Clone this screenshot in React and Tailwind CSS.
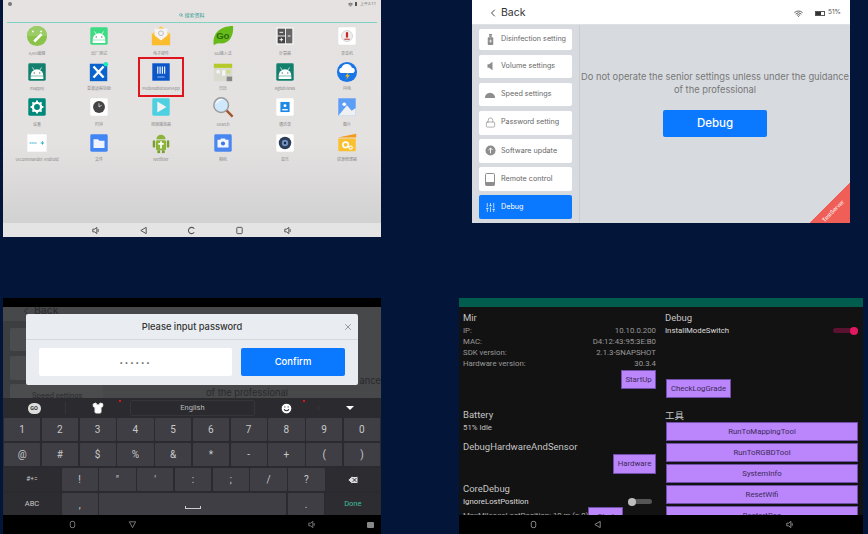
import React from 'react';
import { ChevronLeft, X, Lock, SlidersVertical, Wifi, Smile, Shirt, Delete, Search } from 'lucide-react';

const Droid = ({ color = '#fff', x = 12, y = 13, s = 1 }) => (
  <g transform={`translate(${x} ${y}) scale(${s})`} fill={color}>
    <path d="M-7 3a7 7 0 0 1 14 0z" />
    <rect x="-7" y="3.6" width="14" height="3" rx=".8" />
    <path d="M-5-6l2 3M5-6l-2 3" stroke={color} strokeWidth=".8" />
    <circle cx="-3" cy="0" r=".8" fill="#0008" />
    <circle cx="3" cy="0" r=".8" fill="#0008" />
  </g>
);

const Svg = ({ children }) => (
  <svg viewBox="0 0 24 24" className="h-[22px] w-[22px]">
    {children}
  </svg>
);

const Tile = ({ bg, children }) => (
  <Svg>
    <rect x="2.5" y="2.5" width="19" height="19" rx="1.5" fill={bg} />
    {children}
  </Svg>
);

const icons = {
  wrench: (
    <Svg>
      <circle cx="12" cy="12" r="11" fill="#8bc34a" />
      <path d="M1 12a11 11 0 0 1 22 0z" fill="#9ccc65" />
      <circle cx="7.5" cy="7" r="1" fill="#fff" />
      <circle cx="16.5" cy="7" r="1" fill="#fff" />
      <path d="M18 11l-8 8-2-2 8-8z" fill="#fff" />
    </Svg>
  ),
  factory: <Tile bg="#3ddc84"><Droid /></Tile>,
  mail: (
    <Svg>
      <path d="M3 9l9-8 9 8v3H3z" fill="#ffca4f" />
      <rect x="5" y="4" width="14" height="13" fill="#f4f4f4" />
      <circle cx="12" cy="9" r="2.6" fill="none" stroke="#aaa" strokeWidth=".8" />
      <path d="M2 9l10 8 10-8v13H2z" fill="#fbbc2d" />
    </Svg>
  ),
  go: (
    <Svg>
      <path d="M2 22C0 10 8 1 23 1c1 12-5 20-15 19-3 0-4 1-6 2z" fill="#66bb1a" />
      <text x="4.5" y="15.5" fontSize="10.5" fontWeight="700" fill="#2e6b0a" fontFamily="Liberation Sans, sans-serif">Go</text>
    </Svg>
  ),
  calc: (
    <Svg>
      <rect x="2.5" y="2.5" width="19" height="19" fill="#f5f5f5" />
      <rect x="4" y="4" width="8" height="7.5" fill="#555" />
      <rect x="4" y="12.5" width="8" height="7.5" fill="#444" />
      <rect x="13" y="4" width="7" height="16" fill="#666" />
      <path d="M6 8h4M6 16h4M8 14v4M15 12h3" stroke="#fff" strokeWidth="1" />
    </Svg>
  ),
  rec: (
    <Tile bg="#fff">
      <circle cx="12" cy="12" r="6" fill="#eee" stroke="#bbb" strokeWidth=".6" />
      <rect x="10.8" y="7.5" width="2.4" height="6.5" rx="1.2" fill="#c62828" />
      <path d="M9 15.5h6" stroke="#c62828" strokeWidth="1" />
    </Tile>
  ),
  teal: <Tile bg="#12806d"><Droid /></Tile>,
  tools: (
    <Svg>
      <rect x="2" y="3" width="19" height="19" fill="#0b63ce" />
      <path d="M6 6l11 12M17 6L6 18" stroke="#fff" strokeWidth="2.6" />
      <circle cx="19.5" cy="3.5" r="2.5" fill="#1de9b6" />
    </Svg>
  ),
  pudu: (
    <Svg>
      <rect x="2.5" y="2.5" width="19" height="19" fill="#0b57c9" />
      <path d="M8.5 6v8M11 6v8M13.5 6v8M16 6v8" stroke="#fff" strokeWidth="1.2" />
      <path d="M8 17.5h8" stroke="#cfe0ff" strokeWidth=".8" />
    </Svg>
  ),
  cal: (
    <Svg>
      <rect x="2" y="3" width="20" height="19" fill="#d9dbd0" />
      <rect x="2" y="3" width="20" height="4.5" fill="#b6c92a" />
      <rect x="5" y="10" width="3.5" height="3.5" fill="#f5f5f5" />
      <rect x="11" y="10" width="3.5" height="6" fill="#f5f5f5" />
      <rect x="16" y="10" width="4" height="3.5" fill="#cfdc78" />
      <rect x="16" y="17" width="6" height="5" fill="#888" />
    </Svg>
  ),
  storm: (
    <Svg>
      <circle cx="12" cy="12" r="11" fill="#1976e8" />
      <path d="M5 13a3 3 0 0 1 1-5.6 6 6 0 0 1 11.4 0A3 3 0 0 1 19 13z" fill="#fff" />
      <path d="M13 13l-3 4h2.4l-1.4 3.5 4-5h-2.4l1-2.5z" fill="#ffc107" />
    </Svg>
  ),
  gear: (
    <Tile bg="#00897b">
      <circle cx="12" cy="12" r="4.5" fill="none" stroke="#fff" strokeWidth="2.6" />
      <path d="M12 5v2.5M12 16.5V19M5 12h2.5M16.5 12H19M7 7l1.7 1.7M15.3 15.3L17 17M17 7l-1.7 1.7M8.7 15.3L7 17" stroke="#fff" strokeWidth="2" />
    </Tile>
  ),
  clock: (
    <Tile bg="#fff">
      <circle cx="12" cy="12" r="6.5" fill="#444" />
      <path d="M12 12l3-2M12 12V8" stroke="#ddd" strokeWidth=".9" />
    </Tile>
  ),
  play: (
    <Tile bg="#4dd0e1">
      <path d="M8 6l10 6-10 6z" fill="#f2f2f2" />
    </Tile>
  ),
  search: (
    <Svg>
      <circle cx="10" cy="10" r="8" fill="#cfe8fb" stroke="#9a9a9a" strokeWidth="1.6" />
      <path d="M5 8a6 6 0 0 1 6-4" stroke="#fff" strokeWidth="1.2" fill="none" />
      <path d="M16 16l6.5 6.5" stroke="#a1552c" strokeWidth="2.6" />
    </Svg>
  ),
  contacts: (
    <Tile bg="#fff">
      <rect x="7" y="6.5" width="10" height="11" fill="#1e88e5" />
      <circle cx="12" cy="10.5" r="1.6" fill="#fff" />
      <path d="M9 15h6" stroke="#fff" strokeWidth="1.4" />
    </Tile>
  ),
  photo: (
    <Svg>
      <rect x="2.5" y="2.5" width="19" height="19" fill="#5c9df5" />
      <circle cx="9" cy="9" r="2" fill="#fff" />
      <path d="M2.5 21.5L12 10l5 6 4.5-3v8.500z" fill="#eef0f2" />
    </Svg>
  ),
  uic: (
    <Svg>
      <rect x="1.500" y="2.500" width="21" height="19" fill="#fff" />
      <path d="M4 12h8M16 12h4M18 10v4" stroke="#29a9c9" strokeWidth="1.2" strokeDasharray="1.500 .5" />
    </Svg>
  ),
  files: (
    <Tile bg="#4285f4">
      <path d="M6 8h5l1.500 1.500H18v8H6z" fill="#eef3fd" />
    </Tile>
  ),
  net: (
    <Svg>
      <path d="M7 8a5 5 0 0 1 10 0z" fill="#8cb33a" />
      <rect x="6.500" y="9" width="11" height="11" rx="1.500" fill="#8cb33a" />
      <rect x="3" y="9" width="2.600" height="8" rx="1.300" fill="#7a9e2e" />
      <rect x="18.400" y="9" width="2.600" height="8" rx="1.300" fill="#7a9e2e" />
      <path d="M12 10v8M9 13h6" stroke="#fff" strokeWidth="1.800" />
      <rect x="8" y="20" width="3" height="3" fill="#7a9e2e" />
      <rect x="13" y="20" width="3" height="3" fill="#7a9e2e" />
    </Svg>
  ),
  camera: (
    <Tile bg="#4a86f0">
      <path d="M6 8.500h3l1-1.500h4l1 1.500h3V17H6z" fill="#f3f6fd" />
      <circle cx="12" cy="12.500" r="2.200" fill="#3b78e7" />
    </Tile>
  ),
  music: (
    <Tile bg="#fff">
      <circle cx="12" cy="12" r="6.800" fill="#2b3c55" />
      <circle cx="12" cy="12" r="3.500" fill="#6f8fc4" />
      <circle cx="12" cy="12" r="1.300" fill="#1b2738" />
    </Tile>
  ),
  res: (
    <Svg>
      <path d="M2 6l20-4v4z" fill="#f59b1c" />
      <rect x="2.500" y="7" width="19" height="14" rx="1" fill="#fbc02d" />
      <circle cx="10.500" cy="14" r="3" fill="none" stroke="#fff" strokeWidth="1.800" />
      <circle cx="16" cy="17" r="1.800" fill="none" stroke="#fff" strokeWidth="1.200" />
    </Svg>
  ),
};

const apps = [
  ['wrench', 'A/A5编辑'], ['factory', '出厂测试'], ['mail', '电子邮件'], ['go', 'GO输入法'], ['calc', '计算器'], ['rec', '录音机'],
  ['teal', 'mapply'], ['tools', '普渡远程协助'], ['pudu', 'PuduRobotsDevApp'], ['cal', '日历'], ['teal', 'RgbdViews'], ['storm', '闪电'],
  ['gear', '设置'], ['clock', '时钟'], ['play', '视频播放器'], ['search', 'Search'], ['contacts', '通讯录'], ['photo', '图片'],
  ['uic', 'UICommander Android'], ['files', '文件'], ['net', 'Netfilter'], ['camera', '相机'], ['music', '音乐'], ['res', '资源管理器'],
];

const NavVolume = ({ color }) => (
  <svg viewBox="0 0 10 10" className="h-[9px] w-[9px]" fill="none" stroke={color} strokeWidth="1.100">
    <path d="M2 3.500h2L6.500 1.500v7L4 6.500H2z" />
    <path d="M8 3.500v3" />
  </svg>
);
const NavBack = ({ color }) => (
  <svg viewBox="0 0 10 10" className="h-[9px] w-[9px]" fill="none" stroke={color} strokeWidth="1.100">
    <path d="M8 1.500L2 5l6 3.500z" />
  </svg>
);
const NavDown = ({ color }) => (
  <svg viewBox="0 0 10 10" className="h-[9px] w-[9px]" fill="none" stroke={color} strokeWidth="1.100">
    <path d="M1.500 2L5 8.500 8.500 2z" />
  </svg>
);
const NavSquare = ({ color }) => (
  <svg viewBox="0 0 10 10" className="h-[9px] w-[9px]" fill="none" stroke={color} strokeWidth="1.100">
    <rect x="2" y="1.500" width="6" height="7" rx=".8" />
  </svg>
);
const NavRecent = ({ color }) => (
  <svg viewBox="0 0 10 10" className="h-[9px] w-[9px]" fill="none" stroke={color} strokeWidth="1.200">
    <path d="M8 3A3.500 3.500 0 1 0 8 7" />
  </svg>
);
const NavHome = ({ color }) => (
  <svg viewBox="0 0 10 10" className="h-[9px] w-[9px]" fill="none" stroke={color} strokeWidth="1.100">
    <rect x="2.500" y="1.500" width="5" height="7" rx="2" />
  </svg>
);

const LauncherPanel = () => (
  <div className="relative ml-[3px] flex h-[237px] w-[378px] flex-col bg-[linear-gradient(180deg,#e6e2e2_0%,#e4e1e1_60%,#cfcfcf_100%)]">
    <div className="flex h-[8px] items-center justify-between pl-[5px] pr-[5px] text-[4px] text-[#666]">
      <span className="h-[4px] w-[4px] rounded-full bg-[#777]" />
      <div className="flex items-center gap-[2px]">
        <Wifi className="h-[5px] w-[5px]" strokeWidth={4} />
        <span className="h-[4px] w-[2px] bg-[#555]" />
        <span className="ml-[1px]">上午2:11</span>
      </div>
    </div>
    <div className="flex h-[14px] items-center justify-center gap-[1px] text-[5px] text-[#2e9d8f] [font-family:'Noto_Sans_CJK_SC',sans-serif]">
      <Search className="h-[4px] w-[4px]" strokeWidth={3} />
      <span>搜索资料</span>
    </div>
    <div className="mx-[4px] h-px bg-[#7fd3c3]" />
    <div className="ml-[3px] mt-[2px] grid w-[372px] grid-cols-6 auto-rows-[35.500px]">
      {apps.map(([icon, label], i) => (
        <div key={i} className="flex flex-col items-center">
          <div className="flex h-[22px] items-center">{icons[icon]}</div>
          <span className="mt-[2.500px] whitespace-nowrap text-[4px] leading-[7px] text-[#888] [font-family:'Noto_Sans_CJK_SC',sans-serif]">
            {label}
          </span>
        </div>
      ))}
    </div>
    <div className="absolute left-[135px] top-[57px] h-[40px] w-[46px] border-2 border-[#e0141c]" />
    <div className="mt-auto flex h-[14px] items-center bg-[#e4e4e4] pl-[68px]">
      <div className="flex w-[48px] justify-center"><NavVolume color="#555" /></div>
      <div className="flex w-[48px] justify-center"><NavBack color="#555" /></div>
      <div className="flex w-[48px] justify-center"><NavRecent color="#555" /></div>
      <div className="flex w-[48px] justify-center"><NavSquare color="#555" /></div>
      <div className="flex w-[48px] justify-center"><NavVolume color="#555" /></div>
    </div>
  </div>
);

const Bottle = () => (
  <svg viewBox="0 0 12 14" className="h-[11px] w-[11px]" fill="#8d8d8d">
    <rect x="4" y="0" width="4" height="2" />
    <rect x="2.500" y="4" width="7" height="10" rx="1" />
    <rect x="4.500" y="2" width="3" height="2" />
    <path d="M6 7v4M4 9h4" stroke="#fff" strokeWidth=".8" />
  </svg>
);
const Speaker = () => (
  <svg viewBox="0 0 12 12" className="h-[10px] w-[10px]" fill="#8d8d8d">
    <path d="M3 4h2l4-3v10L5 8H3z" />
  </svg>
);
const Speed = () => (
  <svg viewBox="0 0 14 10" className="h-[10px] w-[12px]" fill="#8d8d8d">
    <path d="M1 8.500a6 6 0 0 1 12 0z" />
  </svg>
);
const Update = () => (
  <svg viewBox="0 0 12 12" className="h-[11px] w-[11px]">
    <circle cx="6" cy="6" r="5.500" fill="#8d8d8d" />
    <path d="M6 9V3.500M3.800 5.500L6 3.300l2.200 2.200" stroke="#fff" strokeWidth="1" fill="none" />
  </svg>
);
const Remote = () => (
  <svg viewBox="0 0 10 13" className="h-[13px] w-[10px]">
    <rect x=".5" y=".5" width="9" height="12" rx="1" fill="#fff" stroke="#8d8d8d" />
    <rect x=".5" y="9" width="9" height="3.500" fill="#8d8d8d" />
  </svg>
);

const menu = [
  { label: 'Disinfection setting', icon: <Bottle />, h: 'h-[21px]' },
  { label: 'Volume settings', icon: <Speaker /> },
  { label: 'Speed settings', icon: <Speed /> },
  { label: 'Password setting', icon: <Lock className="h-[11px] w-[11px] text-[#8d8d8d]" strokeWidth={1.500} /> },
  { label: 'Software update', icon: <Update /> },
  { label: 'Remote control', icon: <Remote /> },
  { label: 'Debug', icon: <SlidersVertical className="h-[11px] w-[11px] text-white" strokeWidth={1.500} />, active: true },
];

const SettingsPanel = () => (
  <div className="relative ml-[91px] flex h-[223px] w-[378px] flex-col overflow-hidden bg-[#d7dbdf] [font-family:Inter,sans-serif]">
    <div className="flex h-[25px] items-center border-b border-[#dfe2e5] bg-white pl-[15px] pr-[9px] pt-[2px]">
      <ChevronLeft className="h-[12px] w-[12px] text-[#444]" strokeWidth={2} />
      <span className="ml-[2px] text-[10.500px] text-[#333]">Back</span>
      <Wifi className="ml-auto h-[9px] w-[11px] text-[#555]" strokeWidth={2.500} />
      <span className="ml-[11px] flex h-[5px] w-[10px] items-center border border-[#555] bg-white">
        <span className="h-full w-[5px] bg-[#333]" />
      </span>
      <span className="ml-[3px] text-[6.500px] text-[#555]">51%</span>
    </div>
    <div className="flex flex-1">
      <div className="flex w-[109px] flex-col gap-[4.500px] border-r border-[#c9cdd1] pl-[7px] pr-[7px] pt-[4px]">
        {menu.map((m) => (
          <div
            key={m.label}
            className={`flex ${m.h || 'h-[23.700px]'} items-center rounded-[2px] ${m.active ? 'bg-[#0a78ff] text-white' : 'bg-white text-[#666]'}`}
          >
            <span className="flex w-[22px] justify-center">{m.icon}</span>
            <span className="whitespace-nowrap text-[7.200px]">{m.label}</span>
          </div>
        ))}
      </div>
      <div className="flex flex-1 flex-col items-center pt-[46px]">
        <p className="w-[270px] text-center text-[9.300px] leading-[12.500px] text-[#777]">
          Do not operate the senior settings unless under the guidance of the professional
        </p>
        <button className="mt-[14px] h-[27px] w-[104px] rounded-[2px] bg-[#0a78ff] text-[11.500px] font-medium text-white">
          Debug
        </button>
      </div>
    </div>
    <div className="absolute bottom-0 right-0 flex h-[40px] w-[40px] bg-[linear-gradient(135deg,transparent_50%,#ef5f57_50%)]" />
    <span className="absolute bottom-[8px] right-[3px] -rotate-45 text-[5.500px] text-white">TestServer</span>
  </div>
);

const KEY = 'flex items-center justify-center rounded-[1px] bg-[#3e3e44] text-[#c9c9c9]';
const KEY_DARK = 'flex items-center justify-center rounded-[1px] bg-[#2c2c31] text-[#c9c9c9]';

const PasswordPanel = () => (
  <div className="ml-[3px] flex h-[236px] w-[378px] flex-col bg-black [font-family:Inter,sans-serif]">
    <div className="h-[9px] bg-black" />
    <div className="relative h-[91px] overflow-hidden bg-[#46484a]">
      <div className="flex h-[7px] items-center pl-[17px] text-[#2a2b2c]">
        <ChevronLeft className="h-[12px] w-[12px]" strokeWidth={2} />
        <span className="ml-[2px] text-[10.500px]">Back</span>
      </div>
      <div className="mt-[7px] flex h-[84px] w-[100px] flex-col gap-[4.500px] bg-[#3c3e40] pl-[7px] pt-[7px] text-[7.200px] text-[#2a2b2c]">
        <div className="h-[23px] shrink-0 rounded-[2px] bg-[#4a4c4e]" />
        <div className="h-[24px] shrink-0 rounded-[2px] bg-[#4a4c4e]" />
        <div className="flex h-[24px] shrink-0 items-start rounded-[2px] bg-[#4a4c4e] pl-[22px] pt-[7px] leading-[10px]">
          <span className="whitespace-nowrap">Speed settings</span>
        </div>
      </div>
      <p className="absolute left-[203px] top-[79px] whitespace-nowrap text-[9.300px] text-[#2a2b2c]">of the professional</p>
      <p className="absolute right-0 top-[67px] text-[9.300px] text-[#2a2b2c]">ance</p>
      <div className="absolute left-[23px] top-[7px] h-[71px] w-[332px] rounded-[2px] bg-[#e9edf1]">
        <div className="relative flex h-[26px] items-center justify-center border-b border-[#d5d9dd] pt-[1px] text-[9.300px] font-medium text-[#333]">
          Please input password
          <X className="absolute right-[5px] h-[10px] w-[10px] text-[#666]" strokeWidth={1.500} />
        </div>
        <div className="flex gap-[9px] pl-[13px] pt-[8px]">
          <div className="flex h-[28px] w-[193px] items-center justify-center rounded-[2px] bg-white text-[6px] tracking-[2px] text-[#555]">
            ••••••
          </div>
          <button className="h-[28px] w-[104px] rounded-[2px] bg-[#0a78ff] text-[9.500px] font-medium text-white">Confirm</button>
        </div>
      </div>
    </div>
    <div className="flex flex-1 flex-col bg-[#2a2a2f] [font-family:Roboto,sans-serif]">
      <div className="flex h-[20px] items-center text-[#eee]">
        <div className="flex w-[62px] justify-center">
          <span className="flex h-[11px] w-[13px] items-center justify-center rounded-full bg-[#ddd] text-[5.500px] font-bold text-[#333]">GO</span>
        </div>
        <div className="relative flex w-[65px] justify-center border-l border-[#35353a]">
          <Shirt className="h-[12px] w-[12px] fill-white" />
          <span className="absolute right-[9px] top-[-2px] h-[2px] w-[2px] bg-[#e0141c]" />
        </div>
        <div className="flex h-[16px] w-[125px] items-center justify-center rounded-[2px] border border-[#35353a] text-[7.500px] text-[#bbb]">English</div>
        <div className="relative flex w-[63px] justify-center">
          <Smile className="h-[13px] w-[13px] fill-white text-[#2a2a2f]" strokeWidth={2} />
          <span className="absolute right-[13px] top-[-2px] h-[2px] w-[2px] bg-[#e0141c]" />
        </div>
        <div className="flex flex-1 justify-center border-l border-[#35353a]">
          <span className="h-0 w-0 border-x-[4px] border-t-[4px] border-x-transparent border-t-white" />
        </div>
      </div>
      <div className="grid h-[23px] grid-cols-10 gap-[1.500px] px-px text-[10px]">
        {['1', '2', '3', '4', '5', '6', '7', '8', '9', '0'].map((k) => (
          <div key={k} className={KEY}>{k}</div>
        ))}
      </div>
      <div className="mt-[2px] grid h-[23px] grid-cols-10 gap-[1.500px] px-px text-[10px]">
        {['@', '#', '$', '%', '&', '*', '-', '+', '(', ')'].map((k) => (
          <div key={k} className={KEY}>{k}</div>
        ))}
      </div>
      <div className="mt-[2px] flex h-[23px] gap-[1.500px] px-px text-[10px]">
        <div className={`${KEY_DARK} w-[56px] text-[6.500px]`}>#+=</div>
        {['!', '"', "'", ':', ';', '/', '?'].map((k) => (
          <div key={k} className={`${KEY} w-[36.300px]`}>{k}</div>
        ))}
        <div className={`${KEY_DARK} flex-1`}><Delete className="h-[12px] w-[12px] fill-[#ddd] text-[#2c2c31]" /></div>
      </div>
      <div className="mt-[2px] flex h-[22px] gap-[1.500px] px-px text-[10px]">
        <div className={`${KEY_DARK} w-[56px] text-[7.500px]`}>ABC</div>
        <div className={`${KEY} w-[36.300px]`}>,</div>
        <div className={`${KEY} w-[187px] items-end pb-[6px]`}><span className="h-[3px] w-[16px] border-x border-b border-[#ccc]" /></div>
        <div className={`${KEY} w-[36.300px]`}>.</div>
        <div className={`${KEY_DARK} flex-1 text-[7.500px] !text-[#3fbf9f]`}>Done</div>
      </div>
    </div>
    <div className="flex h-[19px] items-center bg-black">
      <div className="ml-[65px]"><NavHome color="#777" /></div>
      <div className="ml-[51px]"><NavDown color="#777" /></div>
      <div className="ml-[170px]"><NavVolume color="#777" /></div>
      <div className="ml-[51px] h-[6px] w-[7px] rounded-[1px] bg-[#888]" />
    </div>
  </div>
);

const PurpleBtn = ({ className, children }) => (
  <div className={`flex items-center justify-center whitespace-nowrap border border-[#6f4fa8] bg-[#bb86fc] text-[7.800px] text-[#3b2a58] ${className}`}>
    {children}
  </div>
);

const infoRows = [
  ['IP:', '10.10.0.200'],
  ['MAC:', 'D4:12:43:95:3E:B0'],
  ['SDK version:', '2.1.3-SNAPSHOT'],
  ['Hardware version:', '30.3.4'],
];

const DebugPanel = () => (
  <div className="ml-[78px] flex h-[236px] w-[404px] flex-col bg-black [font-family:Roboto,sans-serif]">
    <div className="h-[9px] bg-[#005c4c]" />
    <div className="flex h-[208px] gap-[9px] overflow-hidden bg-[#121212] pl-[4px] pr-[5px]">
      <div className="w-[193px] shrink-0">
        <div className="mt-[4px] text-[9.500px] leading-[14px] text-[#c4c4c4]">Mir</div>
        {infoRows.map(([k, v]) => (
          <div key={k} className="flex h-[11px] items-center justify-between text-[7.800px] text-[#9a9a9a]">
            <span>{k}</span>
            <span>{v}</span>
          </div>
        ))}
        <PurpleBtn className="ml-auto mt-[1px] h-[19px] w-[35px]">StartUp</PurpleBtn>
        <div className="mt-[19px] text-[9.500px] leading-[14px] text-[#c4c4c4]">Battery</div>
        <div className="text-[7.800px] leading-[11px] text-[#c4c4c4]">51% Idle</div>
        <div className="mt-[7px] text-[9.500px] leading-[14px] text-[#c4c4c4]">DebugHardwareAndSensor</div>
        <PurpleBtn className="ml-auto h-[20px] w-[43px]">Hardware</PurpleBtn>
        <div className="mt-[8px] text-[9.500px] leading-[14px] text-[#c4c4c4]">CoreDebug</div>
        <div className="flex h-[11px] items-center justify-between pr-[4px] text-[7.800px] text-[#ddd]">
          <span>IgnoreLostPosition</span>
          <span className="relative h-[5px] w-[24px] rounded-full bg-[#555]">
            <span className="absolute left-0 top-[-1.500px] h-[8px] w-[8px] rounded-full bg-[#bdbdbd]" />
          </span>
        </div>
        <div className="flex items-start justify-between pr-[33px] text-[7.800px] text-[#aaa]">
          <span className="mt-[3px] whitespace-nowrap">MaxMileageLostPosition: 10 m (≈ 0)</span>
          <PurpleBtn className="h-[19px] w-[35px] shrink-0">Start</PurpleBtn>
        </div>
      </div>
      <div className="flex-1">
        <div className="mt-[4px] text-[9.500px] leading-[14px] text-[#c4c4c4]">Debug</div>
        <div className="flex h-[11px] items-center justify-between text-[7.800px] text-[#ddd]">
          <span>InstallModeSwitch</span>
          <span className="relative h-[5px] w-[25px] rounded-full bg-[#5a1230]">
            <span className="absolute right-0 top-[-1.500px] h-[8px] w-[8px] rounded-full bg-[#e0185f]" />
          </span>
        </div>
        <PurpleBtn className="ml-px mt-[43px] h-[19px] w-[65px]">CheckLogGrade</PurpleBtn>
        <div className="mt-[10px] text-[9.500px] leading-[14px] text-[#c4c4c4] [font-family:'Noto_Sans_CJK_SC',sans-serif]">工具</div>
        <div className="ml-px flex flex-col gap-[2px]">
          {['RunToMappingTool', 'RunToRGBDTool', 'SystemInfo', 'ResetWifi', 'RestartRos'].map((t) => (
            <PurpleBtn key={t} className="h-[19px] w-full shrink-0">{t}</PurpleBtn>
          ))}
        </div>
      </div>
    </div>
    <div className="flex h-[19px] items-center bg-black">
      <div className="ml-[70px]"><NavHome color="#888" /></div>
      <div className="ml-[55px]"><NavBack color="#888" /></div>
      <div className="ml-[183px]"><NavVolume color="#888" /></div>
    </div>
  </div>
);

export default function App() {
  return (
    <div className="flex h-[534px] w-[868px] flex-col overflow-hidden bg-[#03163a]">
      <div className="flex h-[298px] items-start">
        <LauncherPanel />
        <SettingsPanel />
      </div>
      <div className="flex">
        <PasswordPanel />
        <DebugPanel />
      </div>
    </div>
  );
}
